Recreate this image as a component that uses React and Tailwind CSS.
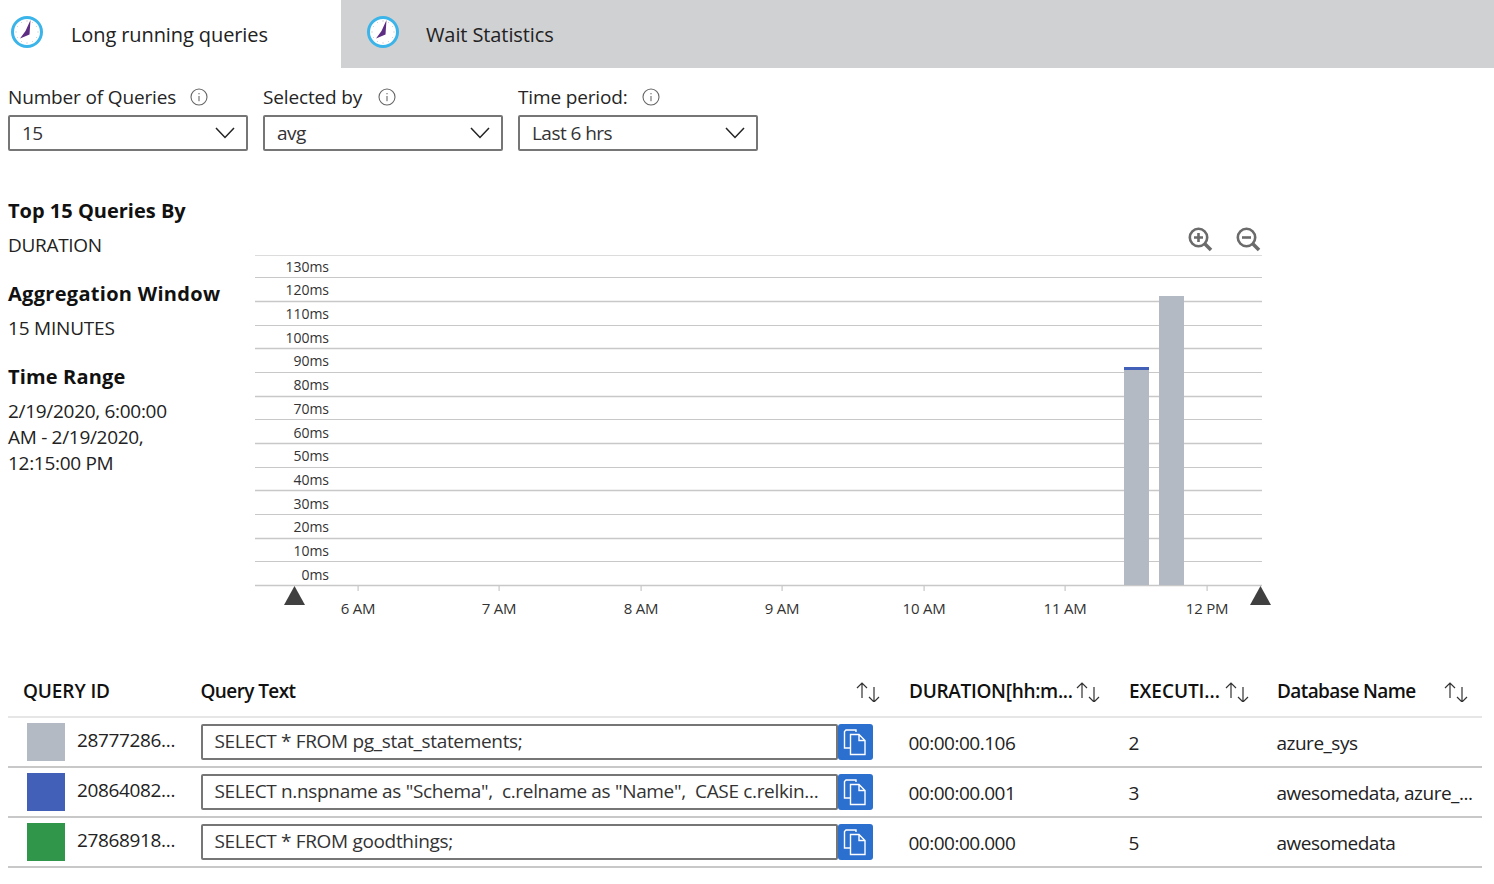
const font = { fontFamily: '"Open Sans", "Noto Sans", sans-serif' };

function Clock() {
  return (
    <svg width="34" height="34" viewBox="0 0 34 34" className="shrink-0">
      <circle cx="17" cy="17" r="14.5" fill="#fff" stroke="#3bb4ea" strokeWidth="3" />
      <g fill="#c9ced6">
        <circle cx="17" cy="6" r=".7" /><circle cx="17" cy="28" r=".7" /><circle cx="6" cy="17" r=".7" /><circle cx="28" cy="17" r=".7" />
        <circle cx="11.5" cy="7.5" r=".6" /><circle cx="22.5" cy="7.5" r=".6" /><circle cx="7.5" cy="11.5" r=".6" /><circle cx="26.5" cy="11.5" r=".6" />
        <circle cx="7.5" cy="22.5" r=".6" /><circle cx="26.5" cy="22.5" r=".6" /><circle cx="11.5" cy="26.5" r=".6" /><circle cx="22.5" cy="26.5" r=".6" />
      </g>
      <path d="M20.5 5 L19.5 19.5 L10 23.5 L15.5 16 Z" fill="#5c2d82" />
    </svg>
  );
}

function Info() {
  return (
    <svg width="18" height="18" viewBox="0 0 18 18" className="shrink-0">
      <circle cx="9" cy="9" r="8" fill="none" stroke="#666" strokeWidth="1.1" />
      <rect x="8.4" y="8" width="1.2" height="5.2" fill="#777" />
      <rect x="8.4" y="5" width="1.2" height="1.3" fill="#777" />
    </svg>
  );
}

function Select({ label, value, infoGap }) {
  return (
    <div className="w-[240px]">
      <div className="flex items-center h-[22px] text-[19px] tracking-[-0.15px] text-[#252525]">
        <span>{label}</span>
        <span className={infoGap}><Info /></span>
      </div>
      <div className="mt-[7px] h-[36px] border-2 border-[#767676] rounded-[2px] flex items-center justify-between pl-[12px] pr-[11px] text-[19px] tracking-[-0.55px] text-[#333]">
        <span>{value}</span>
        <svg width="20" height="12" viewBox="0 0 20 12"><path d="M1 1 L10 10.5 L19 1" fill="none" stroke="#222" strokeWidth="1.5" /></svg>
      </div>
    </div>
  );
}

function Sort() {
  return (
    <svg width="26" height="20" viewBox="0 0 26 20" className="shrink-0">
      <path d="M7 16 V1 M2 6 L7 1 L12 6" fill="none" stroke="#333" strokeWidth="1.2" />
      <path d="M19 5 V20 M14 15 L19 20 L24 15" fill="none" stroke="#333" strokeWidth="1.2" />
    </svg>
  );
}

function Copy() {
  return (
    <div className="w-[35px] h-[36px] bg-[#2b6fcf] rounded-[3px] flex items-center justify-center shrink-0">
      <svg width="24" height="28" viewBox="0 0 24 28">
        <path d="M13 4 V2 H3 L1.5 3.5 V20 H7" fill="none" stroke="#fff" strokeWidth="1.4" />
        <path d="M7.5 6.5 H16 L22 12.5 V26.5 H7.5 Z M16 6.5 V12.5 H22" fill="none" stroke="#fff" strokeWidth="1.4" />
      </svg>
    </div>
  );
}

const ys = [255, 277, 301, 325, 348, 372, 396, 419, 443, 467, 490, 514, 538, 561, 585];
const labels = ['130ms','120ms','110ms','100ms','90ms','80ms','70ms','60ms','50ms','40ms','30ms','20ms','10ms','0ms'];
const labelTops = [258, 281, 305, 329, 352, 376, 400, 424, 447, 471, 495, 518, 542, 566];
const hours = [['6 AM',358],['7 AM',499],['8 AM',641],['9 AM',782],['10 AM',924],['11 AM',1065],['12 PM',1207]];

function Chart() {
  return (
    <div className="absolute left-0 top-0 w-[1494px] h-[640px] pointer-events-none">
      <svg width="1494" height="640" className="absolute left-0 top-0">
        {ys.map((y, i) => (
          <line key={y} x1="255" x2="1262" y1={y + 0.5} y2={y + 0.5} stroke={i === 0 ? '#dcdcdc' : '#c8c8c8'} strokeWidth={i % 2 === 0 && i > 0 ? 1.6 : 1.1} />
        ))}
        {hours.map(([, x]) => <rect key={x} x={x - 0.5} y="586" width="1.2" height="5" fill="#c8c8c8" />)}
        <rect x="1124" y="368" width="25" height="217" fill="#b3bac4" />
        <rect x="1124" y="367" width="25" height="3" fill="#4360b8" />
        <rect x="1159" y="296" width="25" height="289" fill="#b3bac4" />
        <path d="M294.5 586 L305 605 L284 605 Z" fill="#404040" />
        <path d="M1260.5 586 L1271 605 L1250 605 Z" fill="#404040" />
        <g fill="none" stroke="#6b6b6b" strokeWidth="2.6">
          <circle cx="1198.5" cy="237.5" r="8.7" />
          <path d="M1194 237.5 H1203 M1198.5 233 V242" />
          <path d="M1205 244 L1211 250" strokeWidth="3.6" />
          <circle cx="1246.5" cy="237.5" r="8.7" />
          <path d="M1242 237.5 H1251" />
          <path d="M1253 244 L1259 250" strokeWidth="3.6" />
        </g>
      </svg>
      {labels.map((t, i) => (
        <div key={t} className="absolute right-[1165px] text-[14px] leading-[18px] tracking-[-0.05px] text-[#333]" style={{ top: labelTops[i] }}>{t}</div>
      ))}
      {hours.map(([t, x]) => (
        <div key={t} className="absolute w-[80px] text-center text-[15px] leading-[18px] tracking-[-0.25px] text-[#333] top-[599px]" style={{ left: x - 40 }}>{t}</div>
      ))}
    </div>
  );
}

const rows = [
  { c: 'bg-[#b3bac4]', id: '28777286...', q: 'SELECT * FROM pg_stat_statements;', d: '00:00:00.106', e: '2', db: 'azure_sys' },
  { c: 'bg-[#4360b8]', id: '20864082...', q: 'SELECT n.nspname as "Schema",  c.relname as "Name",  CASE c.relkin...', d: '00:00:00.001', e: '3', db: 'awesomedata, azure_...' },
  { c: 'bg-[#30964a]', id: '27868918...', q: 'SELECT * FROM goodthings;', d: '00:00:00.000', e: '5', db: 'awesomedata' },
];

export default function App() {
  return (
    <div style={font} className="relative w-[1494px] h-[884px] bg-white overflow-hidden text-[#222]">
      <div className="flex h-[68px]">
        <div className="w-[341px] flex items-start">
          <span className="ml-[10px] mt-[15px]"><Clock /></span>
          <span className="ml-[27px] mt-[21px] text-[20px] leading-[27px] tracking-[-0.1px]">Long running queries</span>
        </div>
        <div className="flex-1 bg-[#d0d1d3] flex items-start">
          <span className="ml-[25px] mt-[15px]"><Clock /></span>
          <span className="ml-[26px] mt-[21px] text-[20px] leading-[27px] tracking-[-0.1px]">Wait Statistics</span>
        </div>
      </div>

      <div className="absolute left-[8px] top-[86px] flex gap-[15px]">
        <Select label="Number of Queries" value="15" infoGap="ml-[14px]" />
        <Select label="Selected by" value="avg" infoGap="ml-[16px]" />
        <Select label="Time period:" value="Last 6 hrs" infoGap="ml-[14px]" />
      </div>

      <div className="absolute left-[8px] top-[198px] w-[175px] text-[19px] leading-[26px] tracking-[-0.3px] text-[#222]">
        <div className="font-bold text-[20px] text-[#111] h-[34px] whitespace-nowrap tracking-[0px]">Top 15 Queries By</div>
        <div className="h-[49px]">DURATION</div>
        <div className="font-bold text-[20px] text-[#111] h-[34px] whitespace-nowrap tracking-[0.3px]">Aggregation Window</div>
        <div className="h-[49px] tracking-[-0.2px]">15 MINUTES</div>
        <div className="font-bold text-[20px] text-[#111] h-[34px] tracking-[0.15px]">Time Range</div>
        <div>2/19/2020, 6:00:00 AM - 2/19/2020, 12:15:00 PM</div>
      </div>

      <Chart />

      <div className="absolute left-[8px] top-[667px] w-[1474px]">
        <div className="flex items-center h-[51px] border-b-2 border-[#e6e6e6] text-[19px] font-semibold tracking-[-0.6px] text-[#111]">
          <div className="w-[192.5px] pl-[15px] tracking-[-0.1px]">QUERY ID</div>
          <div className="w-[708.5px] flex items-center justify-between pr-[28px]"><span>Query Text</span><Sort /></div>
          <div className="w-[220px] flex items-center"><span className="whitespace-nowrap tracking-[-0.3px]">DURATION[hh:m...</span><span className="ml-[2px]"><Sort /></span></div>
          <div className="w-[148px] flex items-center"><span className="whitespace-nowrap tracking-[-0.05px]">EXECUTI...</span><span className="ml-[4px]"><Sort /></span></div>
          <div className="flex-1 flex items-center justify-between pr-[13px]"><span>Database Name</span><Sort /></div>
        </div>
        {rows.map((r) => (
          <div key={r.id} className="flex items-center h-[50px] border-b-2 border-[#c8c8c8] text-[19px] tracking-[-0.5px]">
            <div className="w-[192.5px] flex items-center pl-[19px]">
              <div className={`w-[38px] h-[38px] ${r.c} shrink-0`} />
              <span className="ml-[12px] -mt-[4px] whitespace-nowrap tracking-[-0.35px]">{r.id}</span>
            </div>
            <div className="w-[673px] flex items-center">
              <div className="w-[637px] h-[36px] border-2 border-[#767676] rounded-[2px] flex items-center pl-[12px] pb-[2px] text-[#333] whitespace-pre overflow-hidden tracking-[-0.33px]">{r.q}</div>
              <Copy />
            </div>
            <div className="ml-[35px] w-[220px] mt-[3px]">{r.d}</div>
            <div className="w-[148px] mt-[3px]">{r.e}</div>
            <div className="flex-1 whitespace-nowrap mt-[3px]">{r.db}</div>
          </div>
        ))}
      </div>
    </div>
  );
}
